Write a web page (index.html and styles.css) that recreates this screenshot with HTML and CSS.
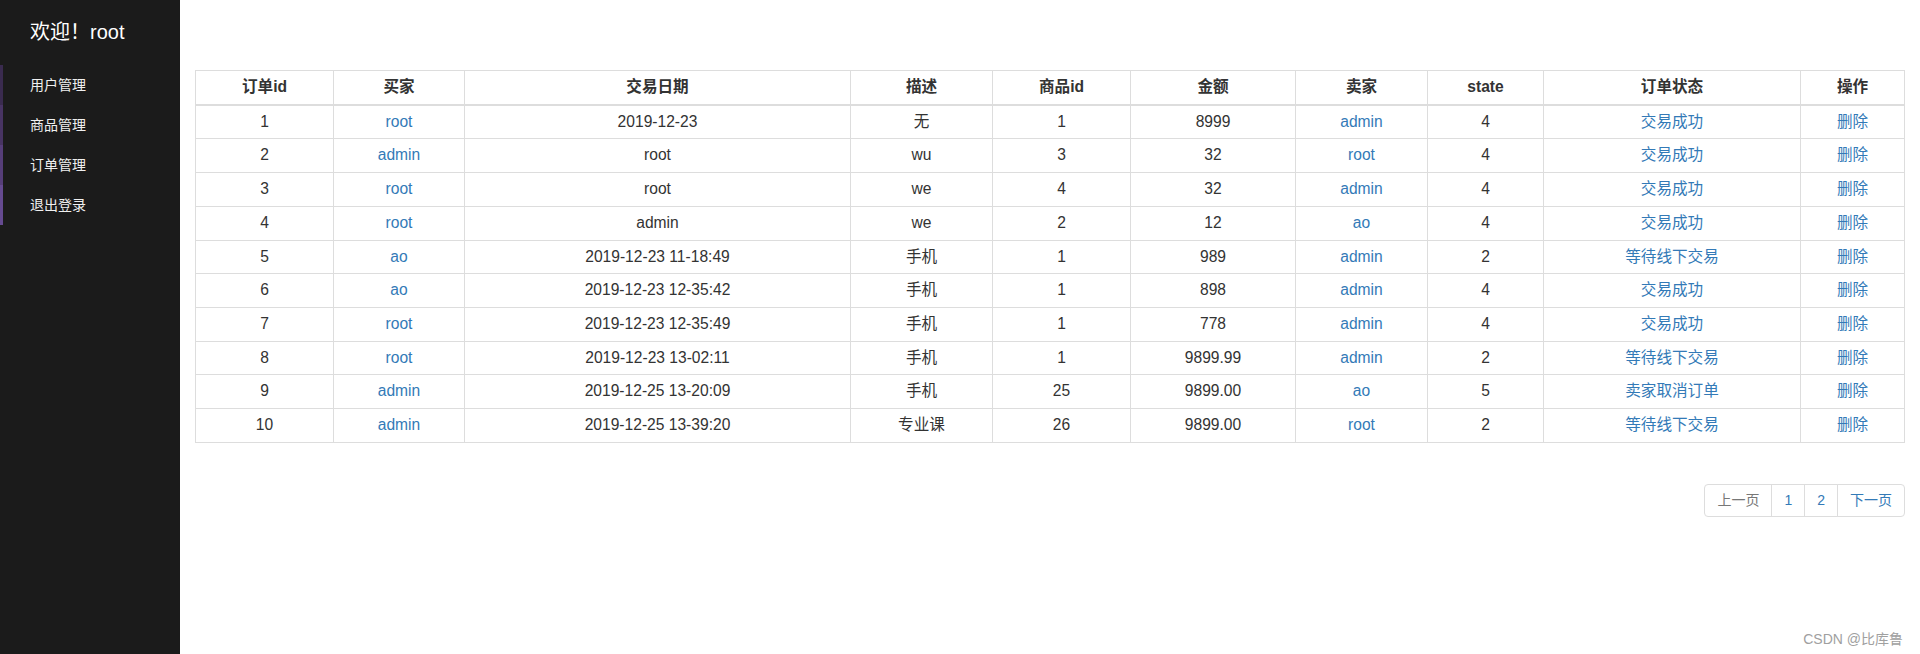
FILE: index.html
```html
<!DOCTYPE html>
<html lang="zh-CN">
<head>
<meta charset="utf-8">
<title>订单管理</title>
<link rel="stylesheet" href="styles.css">
</head>
<body>
<div class="layout">
  <aside class="sidebar">
    <div class="brand">欢迎！root</div>
    <ul class="menu">
      <li class="m1">用户管理</li>
      <li class="m2">商品管理</li>
      <li class="m3">订单管理</li>
      <li class="m4">退出登录</li>
    </ul>
  </aside>
  <main class="content">
    <table class="orders">
      <colgroup>
        <col class="c1"><col class="c2"><col class="c3"><col class="c4"><col class="c5">
        <col class="c6"><col class="c7"><col class="c8"><col class="c9"><col class="c10">
      </colgroup>
      <thead>
        <tr><th>订单id</th><th>买家</th><th>交易日期</th><th>描述</th><th>商品id</th><th>金额</th><th>卖家</th><th>state</th><th>订单状态</th><th>操作</th></tr>
      </thead>
      <tbody>
        <tr><td>1</td><td><a>root</a></td><td>2019-12-23</td><td>无</td><td>1</td><td>8999</td><td><a>admin</a></td><td>4</td><td><a>交易成功</a></td><td><a>删除</a></td></tr>
        <tr><td>2</td><td><a>admin</a></td><td>root</td><td>wu</td><td>3</td><td>32</td><td><a>root</a></td><td>4</td><td><a>交易成功</a></td><td><a>删除</a></td></tr>
        <tr><td>3</td><td><a>root</a></td><td>root</td><td>we</td><td>4</td><td>32</td><td><a>admin</a></td><td>4</td><td><a>交易成功</a></td><td><a>删除</a></td></tr>
        <tr><td>4</td><td><a>root</a></td><td>admin</td><td>we</td><td>2</td><td>12</td><td><a>ao</a></td><td>4</td><td><a>交易成功</a></td><td><a>删除</a></td></tr>
        <tr><td>5</td><td><a>ao</a></td><td>2019-12-23 11-18:49</td><td>手机</td><td>1</td><td>989</td><td><a>admin</a></td><td>2</td><td><a>等待线下交易</a></td><td><a>删除</a></td></tr>
        <tr><td>6</td><td><a>ao</a></td><td>2019-12-23 12-35:42</td><td>手机</td><td>1</td><td>898</td><td><a>admin</a></td><td>4</td><td><a>交易成功</a></td><td><a>删除</a></td></tr>
        <tr><td>7</td><td><a>root</a></td><td>2019-12-23 12-35:49</td><td>手机</td><td>1</td><td>778</td><td><a>admin</a></td><td>4</td><td><a>交易成功</a></td><td><a>删除</a></td></tr>
        <tr><td>8</td><td><a>root</a></td><td>2019-12-23 13-02:11</td><td>手机</td><td>1</td><td>9899.99</td><td><a>admin</a></td><td>2</td><td><a>等待线下交易</a></td><td><a>删除</a></td></tr>
        <tr><td>9</td><td><a>admin</a></td><td>2019-12-25 13-20:09</td><td>手机</td><td>25</td><td>9899.00</td><td><a>ao</a></td><td>5</td><td><a>卖家取消订单</a></td><td><a>删除</a></td></tr>
        <tr><td>10</td><td><a>admin</a></td><td>2019-12-25 13-39:20</td><td>专业课</td><td>26</td><td>9899.00</td><td><a>root</a></td><td>2</td><td><a>等待线下交易</a></td><td><a>删除</a></td></tr>
      </tbody>
    </table>
    <div class="pager-row">
      <ul class="pagination">
        <li class="disabled"><span>上一页</span></li>
        <li><a>1</a></li>
        <li><a>2</a></li>
        <li><a>下一页</a></li>
      </ul>
    </div>
  </main>
</div>
<div class="watermark">CSDN @比库鲁</div>
</body>
</html>
```

FILE: styles.css
```css
* { box-sizing: border-box; }

html, body {
  margin: 0;
  padding: 0;
  height: 100%;
}

body {
  font-family: "Liberation Sans", "Noto Sans CJK SC", sans-serif;
  color: #333;
  background: #fff;
  position: relative;
  overflow: hidden;
}

.layout {
  display: flex;
  height: 654px;
}

.sidebar {
  width: 180px;
  flex: 0 0 180px;
  background: #1b1b1b;
  color: #fff;
}

.brand {
  margin-top: 18px;
  padding-left: 30px;
  font-size: 20px;
  line-height: 28px;
  height: 28px;
  color: #fff;
}

.menu {
  list-style: none;
  margin: 19px 0 0 0;
  padding: 0;
}

.menu li {
  height: 40px;
  line-height: 40px;
  padding-left: 27px;
  border-left: 3px solid #3c2c52;
  font-size: 14px;
  color: #f0f0f0;
}

.menu .m1 { border-left-color: #3a2b4f; }
.menu .m2 { border-left-color: #483463; }
.menu .m3 { border-left-color: #563e79; }
.menu .m4 { border-left-color: #654a90; }

.content {
  flex: 1 1 auto;
  padding: 70px 16px 0 15px;
}

.orders {
  width: 1709px;
  border-collapse: collapse;
  table-layout: fixed;
  font-size: 15.6px;
  border: 1px solid #ddd;
}

.c1 { width: 138px; }
.c2 { width: 131px; }
.c3 { width: 386px; }
.c4 { width: 142px; }
.c5 { width: 138px; }
.c6 { width: 165px; }
.c7 { width: 132px; }
.c8 { width: 116px; }
.c9 { width: 257px; }
.c10 { width: 104px; }

.orders th,
.orders td {
  border: 1px solid #ddd;
  padding: 6px 5px;
  line-height: 20.7px;
  text-align: center;
  white-space: nowrap;
}

.orders th {
  font-weight: bold;
  border-bottom: 2px solid #ddd;
  color: #333;
}

.orders a {
  color: #337ab7;
  text-decoration: none;
}

.pager-row {
  display: flex;
  justify-content: flex-end;
  margin-top: 41px;
}

.pagination {
  display: flex;
  list-style: none;
  margin: 0;
  padding: 0;
  font-size: 14px;
}

.pagination li > a,
.pagination li > span {
  display: block;
  height: 33px;
  line-height: 31px;
  padding: 0 12px;
  border: 1px solid #ddd;
  margin-left: -1px;
  color: #337ab7;
  background: #fff;
}

.pagination li:first-child > span,
.pagination li:first-child > a {
  margin-left: 0;
  border-radius: 4px 0 0 4px;
}

.pagination li:last-child > a {
  border-radius: 0 4px 4px 0;
}

.pagination .disabled > span {
  color: #777;
}

.watermark {
  position: absolute;
  right: 17px;
  bottom: 7px;
  font-size: 14px;
  line-height: 16px;
  color: #a0a0a0;
}
```
